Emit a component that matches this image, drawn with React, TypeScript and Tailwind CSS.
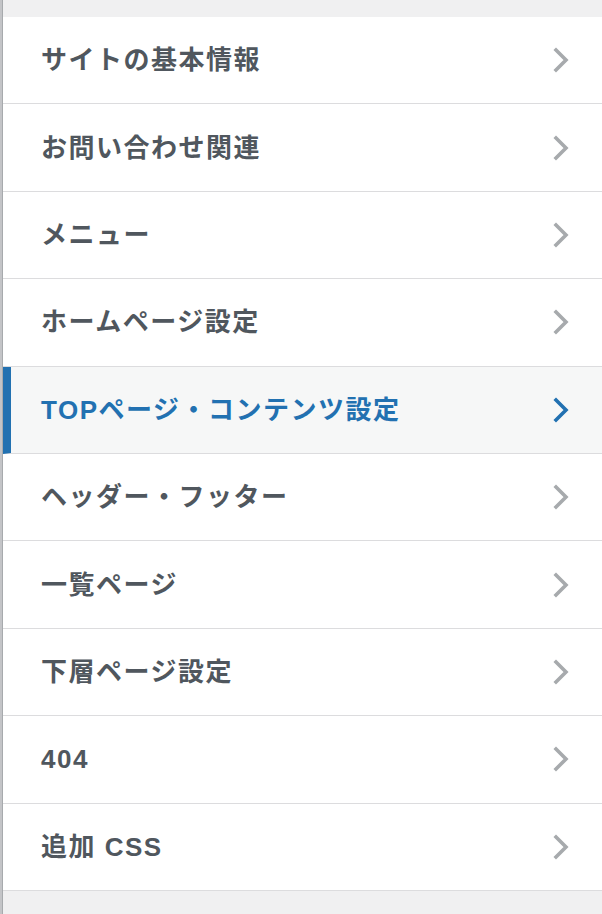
const items = [
  "サイトの基本情報",
  "お問い合わせ関連",
  "メニュー",
  "ホームページ設定",
  "TOPページ・コンテンツ設定",
  "ヘッダー・フッター",
  "一覧ページ",
  "下層ページ設定",
  "404",
  "追加 CSS",
];

function Chevron({ active }: { active: boolean }) {
  return (
    <svg width="18" height="26" viewBox="0 0 18 26" className={active ? "text-[#2271b1]" : "text-[#a7aaad]"}>
      <path d="M4 3 L14 13 L4 23" fill="none" stroke="currentColor" strokeWidth="3.6" strokeLinecap="square" strokeLinejoin="miter" />
    </svg>
  );
}

function Item({ label, active }: { label: string; active: boolean }) {
  return (
    <li
      className={
        "h-[87.4px] flex items-center justify-between border-b border-b-[#dcdcde] pr-[32px] " +
        (active ? "bg-[#f6f7f7] text-[#2271b1] border-l-[8px] border-l-[#2271b1] pl-[30px]" : "bg-white text-[#50575e] pl-[38px]")
      }
    >
      <span className="text-[26px] font-bold leading-none tracking-[1.5px]">{label}</span>
      <Chevron active={active} />
    </li>
  );
}

export default function App() {
  return (
    <div
      className="flex h-[914px] w-[602px] overflow-hidden bg-[#f0f0f1]"
      style={{ fontFamily: '"Liberation Sans", "Noto Sans CJK JP", sans-serif' }}
    >
      <div className="w-[3px] bg-[#c3c4c7] border-r border-r-[#a7aaad]" />
      <div className="flex-1 flex flex-col pt-[17px]">
        <ul className="flex flex-col">
          {items.map((t, i) => (
            <Item key={t} label={t} active={i === 4} />
          ))}
        </ul>
      </div>
    </div>
  );
}
